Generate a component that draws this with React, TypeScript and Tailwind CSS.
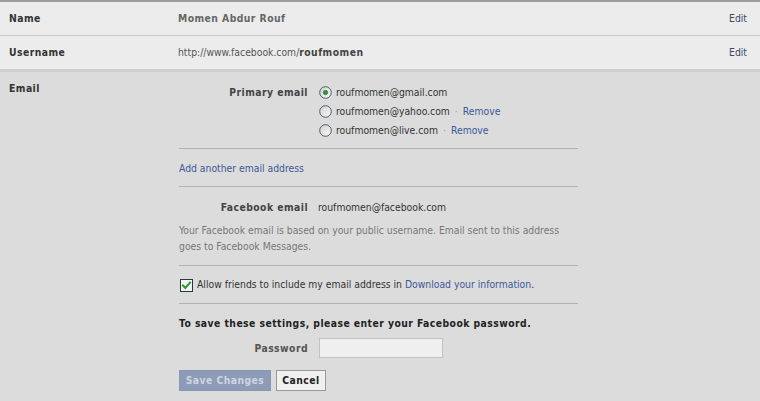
import React from "react";

function Radio({ checked }: { checked?: boolean }) {
  return (
    <svg width="13" height="13" viewBox="0 0 13 13" className="shrink-0">
      <defs>
        <linearGradient id={checked ? "rg1" : "rg0"} x1="0" y1="0" x2="1" y2="1">
          <stop offset="0" stopColor="#d2d2d2" />
          <stop offset="1" stopColor="#f8f8f8" />
        </linearGradient>
      </defs>
      <circle cx="6.5" cy="6.5" r="5.8" fill={`url(#${checked ? "rg1" : "rg0"})`} stroke="#4f5a64" strokeWidth="1" />
      {checked && <circle cx="6.5" cy="6.5" r="2.2" fill="#2f9a34" stroke="#1d6b22" strokeWidth="0.6" />}
    </svg>
  );
}

function Checkbox() {
  return (
    <svg width="13" height="13" viewBox="0 0 13 13" className="shrink-0">
      <rect x="0.5" y="0.5" width="12" height="12" fill="#f4f4f4" stroke="#27384a" strokeWidth="1" />
      <path d="M3 6.5 L5.3 9 L10 3.6" fill="none" stroke="#2c9a2c" strokeWidth="2" strokeLinecap="square" />
    </svg>
  );
}

function Sep() {
  return <div className="h-px w-[399px] bg-[#b1b1b1]" />;
}

export default function App() {
  return (
    <div className="w-[760px] h-[401px] overflow-hidden bg-[#dcdcdc] text-[10.3px] text-[#333] font-['DejaVu_Sans_Condensed','DejaVu_Sans',sans-serif]">
      <div className="h-[2px] bg-[#9c9c9c]" />
      <div className="flex h-[34px] items-center bg-[#ececec] border-b border-[#cacaca] pl-[9px] pr-[13px]">
        <div className="w-[169px] font-bold tracking-[0.45px] text-[#333]">Name</div>
        <div className="flex-1 font-bold tracking-[0.45px] text-[#666]">Momen Abdur Rouf</div>
        <div className="text-[#3b4a66]">Edit</div>
      </div>
      <div className="flex h-[36px] items-center bg-[#ececec] border-b-[3px] border-[#cfcfcf] pl-[9px] pr-[13px]">
        <div className="w-[169px] font-bold tracking-[0.45px] text-[#333]">Username</div>
        <div className="flex-1 text-[#555]">
          http://www.facebook.com/<span className="font-bold tracking-[0.45px] text-[#444]">roufmomen</span>
        </div>
        <div className="text-[#3b4a66]">Edit</div>
      </div>
      <div className="flex">
        <div className="w-[179px] pl-[9px] pt-[9px] font-bold tracking-[0.45px] leading-[14px]">Email</div>
        <div className="flex flex-col pt-[11px]">
          <div className="flex">
            <div className="w-[129px] text-right font-bold tracking-[0.45px] text-[#444] h-[19px] flex items-center justify-end">Primary email</div>
            <div className="ml-[11px] flex flex-col">
              <div className="flex h-[19px] items-center gap-[4px]">
                <Radio checked />
                <span>roufmomen@gmail.com</span>
              </div>
              <div className="flex h-[19px] items-center gap-[4px]">
                <Radio />
                <span>roufmomen@yahoo.com</span>
                <span className="text-[#999] mx-[1px]">·</span>
                <span className="text-[#3b5998]">Remove</span>
              </div>
              <div className="flex h-[19px] items-center gap-[4px]">
                <Radio />
                <span>roufmomen@live.com</span>
                <span className="text-[#999] mx-[1px]">·</span>
                <span className="text-[#3b5998]">Remove</span>
              </div>
            </div>
          </div>
          <div className="mt-[8px]"><Sep /></div>
          <div className="h-[37px] pt-[3px] flex items-center text-[#3b5998]">Add another email address</div>
          <Sep />
          <div className="flex mt-[13px] h-[16px] items-center">
            <div className="w-[129px] text-right font-bold tracking-[0.45px] text-[#444]">Facebook email</div>
            <div className="ml-[10px]">roufmomen@facebook.com</div>
          </div>
          <div className="mt-[6px] w-[399px] leading-[16px] text-[#777]">
            Your Facebook email is based on your public username. Email sent to this address goes to Facebook Messages.
          </div>
          <div className="mt-[11px]"><Sep /></div>
          <div className="mt-[11px] flex h-[16px] items-center gap-[4px] pl-[1px]">
            <Checkbox />
            <span>
              Allow friends to include my email address in <span className="text-[#3b5998]">Download your information</span>.
            </span>
          </div>
          <div className="mt-[10px]"><Sep /></div>
          <div className="mt-[12px] h-[16px] flex items-center font-bold tracking-[0.45px] text-[#222]">
            To save these settings, please enter your Facebook password.
          </div>
          <div className="mt-[6px] flex h-[20px] items-center">
            <div className="w-[129px] text-right font-bold tracking-[0.45px] text-[#555] pt-[2px]">Password</div>
            <div className="ml-[11px] w-[124px] h-[20px] bg-[#efefef] border border-[#bfc4cb]" />
          </div>
          <div className="mt-[12px] flex gap-[5px]">
            <div className="w-[92px] h-[21px] flex items-center justify-center bg-[#8e9bb6] border border-[#8898b0] font-bold tracking-[0.45px] text-[#cdd5e3]">
              Save Changes
            </div>
            <div className="w-[50px] h-[21px] flex items-center justify-center bg-[#f0f0f0] border border-[#9a9a9a] font-bold tracking-[0.45px] text-[#222]">
              Cancel
            </div>
          </div>
        </div>
      </div>
    </div>
  );
}
